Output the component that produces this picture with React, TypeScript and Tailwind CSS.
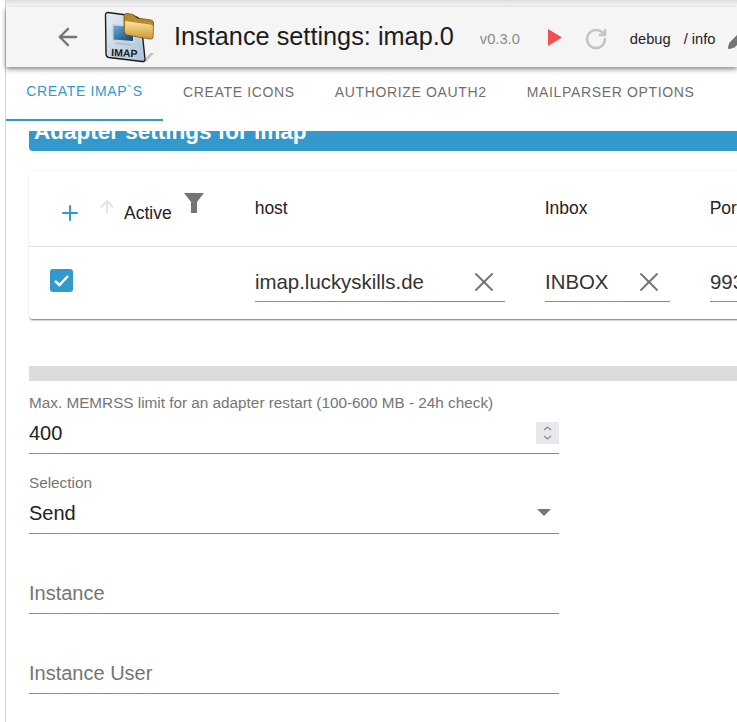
import React from 'react';
import { ArrowLeft, RotateCw, Pencil, Plus, ArrowUp, X } from 'lucide-react';

const ImapLogo = () => (
  <svg width="58" height="54" viewBox="0 0 58 54" className="shrink-0">
    <defs>
      <linearGradient id="doc" x1="0" y1="0" x2="1" y2="1">
        <stop offset="0" stopColor="#e6eef5" />
        <stop offset="1" stopColor="#a9c2d6" />
      </linearGradient>
      <linearGradient id="folder" x1="0" y1="0" x2="0" y2="1">
        <stop offset="0" stopColor="#f9e3a0" />
        <stop offset="1" stopColor="#cf9a36" />
      </linearGradient>
      <linearGradient id="screen" x1="0" y1="0" x2="1" y2="1">
        <stop offset="0" stopColor="#6aaee0" />
        <stop offset="1" stopColor="#123f7a" />
      </linearGradient>
    </defs>
    <path d="M39 51 L46 42 L50 42 L42 51 Z" fill="#9a9a9a" opacity="0.55" />
    <path d="M4 1.5 L30 5 Q34 6 37 10 L41 48 Q41 51 38 50.5 L5 46.5 Q2 46 2 43 L1.5 4 Q1.5 1.5 4 1.5 Z" fill="url(#doc)" stroke="#1c1c1c" strokeWidth="1.4" />
    <path d="M8 13 L31 15 L31 32 L8 30 Z" fill="#cfd6dc" />
    <path d="M9.5 14.5 L29 16 L29 30 L9.5 28.5 Z" fill="url(#screen)" />
    <path d="M12 31 L27 33 L28 35 L11 33 Z" fill="#b7c0c8" />
    <text x="7" y="45" fontFamily="Liberation Sans, sans-serif" fontSize="10.5" fontWeight="700" fill="#1a1a1a" transform="rotate(3 7 45)">IMAP</text>
    <path d="M20 5 Q20 2 23 2.5 L29 3.5 L33 7 L47 9 Q49.5 9.5 49.5 12 L49 26 Q49 28.5 46 28 L23 24 Q20 23.5 20 20 Z" fill="#b98a2b" stroke="#6e5318" strokeWidth="0.8" />
    <path d="M21 10 L46 13.5 Q49 14 49 16 L48.5 25.5 Q48 28 45.5 27.5 L23.5 23.5 Q21 23 21 20 Z" fill="url(#folder)" />
  </svg>
);

const TableInput = ({ value, className }: { value: string; className: string }) => (
  <div className={`flex h-[39px] shrink-0 items-center border-b border-[#8c8c8c] text-[20.4px] text-[#333] ${className}`}>
    <span className="flex-1 whitespace-nowrap">{value}</span>
    <X className="mr-[5px] h-[32px] w-[32px] text-[#757575]" strokeWidth={1.4} />
  </div>
);

const EmptyField = ({ label }: { label: string }) => (
  <div className="mt-[40px] flex h-[40px] w-[530px] items-center border-b border-[#8c8c8c] pb-[1px] text-[20px] text-[#757575]">
    {label}
  </div>
);

const tabs = ['CREATE ICONS', 'AUTHORIZE OAUTH2', 'MAILPARSER OPTIONS'];

export default function App() {
  return (
    <div className="h-[722px] w-[737px] overflow-hidden bg-white font-['Liberation_Sans',Arial,sans-serif]">
      <div className="ml-[5px] flex h-full flex-col border-l border-[#d4d4d4]">
        <div className="h-[7px] shrink-0 bg-gradient-to-b from-[#dcdcdc] to-white" />

        {/* toolbar */}
        <div className="z-10 flex h-[60px] shrink-0 items-center whitespace-nowrap bg-[#f5f5f5] shadow-[0_2px_5px_rgba(0,0,0,0.5)]">
          <ArrowLeft className="ml-[48px] h-[28px] w-[28px] shrink-0 text-[#757575]" strokeWidth={2} />
          <div className="ml-[22px] mt-[2px]"><ImapLogo /></div>
          <span className="ml-[12px] -mt-[1px] text-[25.3px] text-[#1c1c1c]">Instance settings: imap.0</span>
          <span className="ml-[26px] mt-[4px] text-[14.7px] text-[#8a8a8a]">v0.3.0</span>
          <svg width="14" height="17" viewBox="0 0 14 17" className="ml-[28px] shrink-0"><path d="M0 0 L14 8.5 L0 17 Z" fill="#f05050" /></svg>
          <RotateCw className="ml-[22px] mt-[3px] h-[24px] w-[24px] shrink-0 text-[#c4c4c4]" strokeWidth={2.6} />
          <span className="ml-[22px] mt-[4px] text-[14.7px] text-[#222]">debug</span>
          <span className="ml-[13px] mt-[4px] text-[14.7px] text-[#222]">/ info</span>
          <Pencil className="ml-[11px] mt-[4px] h-[22px] w-[22px] shrink-0 fill-[#757575] text-[#757575]" />
        </div>

        {/* tabs */}
        <div className="flex h-[54px] shrink-0 whitespace-nowrap text-[14px] tracking-[0.65px]">
          <div className="flex w-[157px] items-center justify-center border-b-2 border-[#3399cc] pb-[4px] text-[#3399cc]">CREATE IMAP`S</div>
          {tabs.map(tab => (
            <div key={tab} className="flex items-center px-[20px] pb-[4px] text-[#6f6f6f]">{tab}</div>
          ))}
        </div>

        {/* scrolled settings page */}
        <div className="mt-[10px] min-h-0 flex-1 overflow-hidden pl-[23px]">
          <div className="-mt-[20px] flex h-[40px] w-[720px] items-center rounded-[4px] bg-[#3399cc] pl-[5px] pt-[2px] text-[22.5px] font-bold text-white">
            Adapter settings for imap
          </div>

          <div className="mt-[20px] h-[148px] w-[760px] overflow-hidden rounded-[4px] bg-white shadow-[0_2px_2px_-1px_rgba(0,0,0,0.55),0_0_2px_rgba(0,0,0,0.1)]">
            <div className="flex h-[76px] border-b border-[#e0e0e0] text-[17.5px] text-[#222]">
              <Plus className="ml-[29px] mt-[30px] h-[24px] w-[24px] shrink-0 text-[#3399cc]" strokeWidth={2} />
              <ArrowUp className="ml-[15px] mt-[26px] h-[20px] w-[20px] shrink-0 text-[#e0e0e0]" strokeWidth={2} />
              <span className="ml-[7px] mt-[29px]">Active</span>
              <svg width="20" height="20" viewBox="0 0 20 20" className="ml-[12px] mt-[22px] shrink-0"><path d="M0 0 H20 L13 9 V20 H7 V9 Z" fill="#757575" /></svg>
              <span className="ml-[51px] mt-[24px] w-[290px]">host</span>
              <span className="mt-[24px] w-[165px]">Inbox</span>
              <span className="mt-[24px]">Port</span>
            </div>
            <div className="flex">
              <div className="ml-[21px] mt-[22px] flex h-[23px] w-[23px] shrink-0 items-center justify-center rounded-[3px] bg-[#3399cc]">
                <svg width="17" height="13" viewBox="0 0 17 13"><path d="M2 7 L6.5 11 L15 2" fill="none" stroke="#fff" strokeWidth="2.4" /></svg>
              </div>
              <div className="ml-[182px] mt-[16px] flex">
                <TableInput value="imap.luckyskills.de" className="w-[250px]" />
                <TableInput value="INBOX" className="ml-[40px] w-[125px]" />
                <div className="ml-[40px] flex h-[39px] w-[120px] items-center border-b border-[#8c8c8c] text-[20.4px] text-[#333]">993</div>
              </div>
            </div>
          </div>

          <div className="mt-[47px] h-[15px] w-[720px] bg-[#dcdcdc]" />

          <div className="mt-[14px] h-[16px] text-[15.3px] leading-[16px] text-[#757575]">Max. MEMRSS limit for an adapter restart (100-600 MB - 24h check)</div>
          <div className="flex h-[43px] w-[530px] items-center justify-between border-b border-[#8c8c8c] pt-[1px] text-[20px] text-[#222]">
            400
            <div className="mt-[1px] flex h-[22px] w-[23px] flex-col items-center justify-center bg-[#e8e8ec]">
              <svg width="9" height="16" viewBox="0 0 9 16"><path d="M1 5 L4.5 2 L8 5 M1 11 L4.5 14 L8 11" fill="none" stroke="#8a8a8a" strokeWidth="1.2" /></svg>
            </div>
          </div>

          <div className="mt-[21px] h-[16px] text-[15.3px] leading-[16px] text-[#757575]">Selection</div>
          <div className="flex h-[43px] w-[530px] items-center justify-between border-b border-[#8c8c8c] pt-[1px] text-[20px] text-[#222]">
            Send
            <svg width="14" height="7" viewBox="0 0 14 7" className="mr-[8px]"><path d="M0 0 H14 L7 7 Z" fill="#757575" /></svg>
          </div>

          <EmptyField label="Instance" />
          <EmptyField label="Instance User" />
        </div>
      </div>
    </div>
  );
}
